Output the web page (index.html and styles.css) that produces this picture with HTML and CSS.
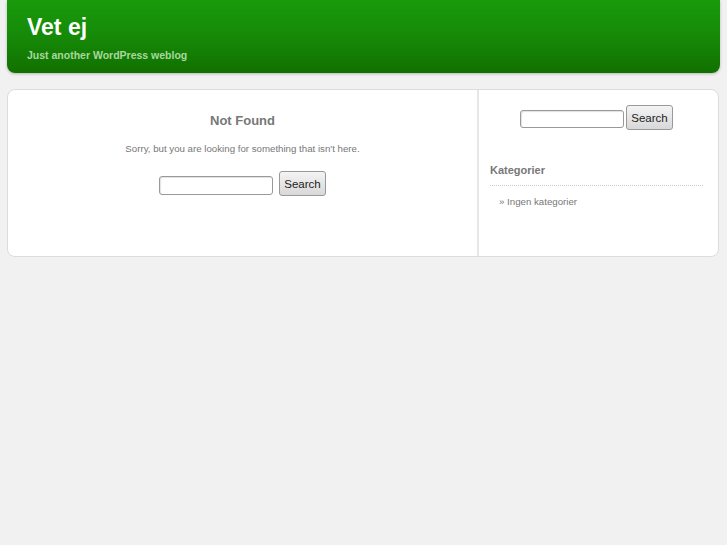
FILE: index.html
```html
<!DOCTYPE html>
<html lang="en">
<head>
    <meta charset="UTF-8">
    <title>Vet ej</title>
    <link rel="stylesheet" href="styles.css">
</head>
<body>
    <div class="header">
        <h1 class="blog-title">Vet ej</h1>
        <div class="description">Just another WordPress weblog</div>
    </div>

    <div class="page">
        <div class="content">
            <h2 class="center">Not Found</h2>
            <p class="center">Sorry, but you are looking for something that isn't here.</p>
            <form class="searchform">
                <input type="text" class="search-input">
                <button type="button" class="search-button">Search</button>
            </form>
        </div>

        <div class="sidebar">
            <form class="searchform sidebar-search">
                <input type="text" class="search-input small">
                <button type="button" class="search-button">Search</button>
            </form>
            <h3 class="widget-title">Kategorier</h3>
            <ul class="widget-list">
                <li>&raquo; Ingen kategorier</li>
            </ul>
        </div>
    </div>
</body>
</html>
```

FILE: styles.css
```css
body {
    margin: 0;
    padding: 0;
    background-color: #f1f1f1;
    font-family: "Liberation Sans", Arial, sans-serif;
    color: #777;
}
.header {
    margin: 0 7px;
    height: 73px;
    box-sizing: border-box;
    padding: 13px 20px 0;
    background: linear-gradient(to bottom, #189a0a 0%, #168a08 50%, #117000 100%);
    border-radius: 0 0 8px 8px;
    box-shadow: 0 1px 3px rgba(0, 0, 0, 0.25);
}
.blog-title {
    margin: 0;
    font-size: 23px;
    line-height: 28px;
    color: #fff;
}
.description {
    margin-top: 8px;
    font-size: 10.5px;
    font-weight: bold;
    color: #a9d89e;
}
.page {
    display: flex;
    margin: 16px 8px 0 7px;
    height: 168px;
    box-sizing: border-box;
    background: #fff;
    border: 1px solid #dcdcdc;
    border-radius: 8px;
}
.content {
    width: 469px;
    text-align: center;
}
.center {
    text-align: center;
}
.content h2 {
    margin: 23px 0 0;
    font-size: 13px;
    line-height: 16px;
    color: #777;
}
.content p {
    margin: 14px 0 0;
    font-size: 9.7px;
    line-height: 12px;
    color: #777;
}
.searchform {
    display: flex;
    justify-content: center;
    align-items: flex-end;
    gap: 6px;
    margin: 0;
}
.content .searchform {
    margin-top: 16px;
}
.search-input {
    width: 114px;
    height: 19px;
    margin-bottom: 1px;
    box-sizing: border-box;
    border: 1px solid #999;
    border-radius: 3px;
    box-shadow: inset 1px 1px 1px rgba(0, 0, 0, 0.12);
    padding: 0 3px;
    font-size: 11px;
}
.search-input.small {
    width: 104px;
    height: 18px;
    margin-bottom: 2px;
}
.sidebar-search .search-input {
    margin-right: -4px;
}
.search-button {
    width: 47px;
    height: 25px;
    box-sizing: border-box;
    padding: 0;
    border: 1px solid #999;
    border-radius: 3px;
    background: linear-gradient(to bottom, #f4f4f4, #d8d8d8);
    font-family: "Liberation Sans", Arial, sans-serif;
    font-size: 11.5px;
    color: #222;
}
.sidebar {
    flex: 1;
    border-left: 2px solid #e6e6e6;
    padding: 15px 15px 0 11px;
}
.widget-title {
    margin: 33px 0 0;
    font-size: 11px;
    line-height: 14px;
    color: #777;
    padding-bottom: 8px;
    border-bottom: 1px dotted #ccc;
}
.widget-list {
    list-style: none;
    margin: 10px 0 0;
    padding: 0 0 0 9px;
    font-size: 9.7px;
    color: #777;
}
```
